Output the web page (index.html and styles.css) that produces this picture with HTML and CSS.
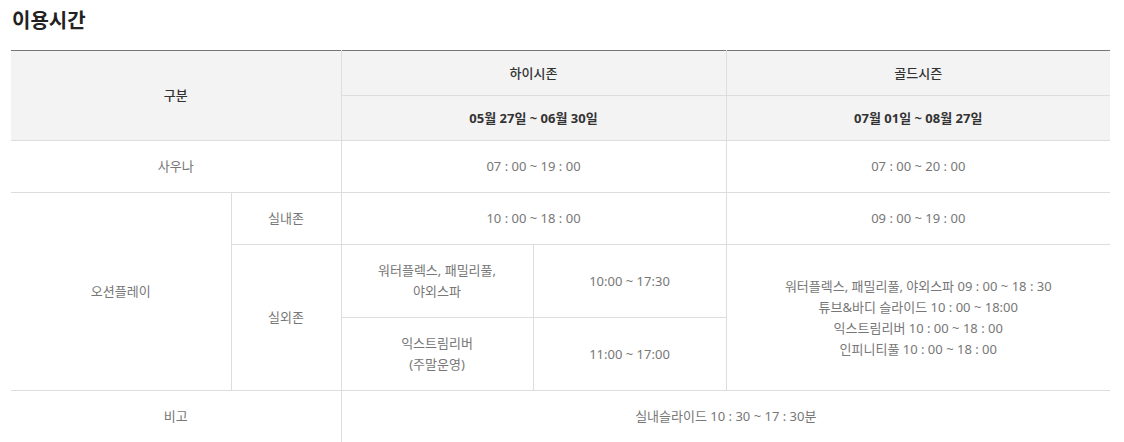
FILE: index.html
```html
<!DOCTYPE html>
<html lang="ko">
<head>
<meta charset="utf-8">
<link rel="stylesheet" href="styles.css">
</head>
<body>
<div class="page">
  <h2 class="title">이용시간</h2>
  <table class="hours">
    <colgroup>
      <col class="c1"><col class="c2"><col class="c3"><col class="c4"><col class="c5">
    </colgroup>
    <thead>
      <tr class="hr1">
        <th rowspan="2" colspan="2" class="top">구분</th>
        <th colspan="2" class="top season">하이시존</th>
        <th class="top season">골드시즌</th>
      </tr>
      <tr class="hr2">
        <th colspan="2" class="date">05월 27일 ~ 06월 30일</th>
        <th class="date">07월 01일 ~ 08월 27일</th>
      </tr>
    </thead>
    <tbody>
      <tr class="r52">
        <td colspan="2">사우나</td>
        <td colspan="2">07 : 00 ~ 19 : 00</td>
        <td>07 : 00 ~ 20 : 00</td>
      </tr>
      <tr class="r52">
        <td rowspan="3">오션플레이</td>
        <td>실내존</td>
        <td colspan="2">10 : 00 ~ 18 : 00</td>
        <td>09 : 00 ~ 19 : 00</td>
      </tr>
      <tr class="r73">
        <td rowspan="2">실외존</td>
        <td>워터플렉스, 패밀리풀,<br>야외스파</td>
        <td>10:00 ~ 17:30</td>
        <td rowspan="2" class="multi">워터플렉스, 패밀리풀, 야외스파 09 : 00 ~ 18 : 30<br>튜브&amp;바디 슬라이드 10 : 00 ~ 18:00<br>익스트림리버 10 : 00 ~ 18 : 00<br>인피니티풀 10 : 00 ~ 18 : 00</td>
      </tr>
      <tr class="r73">
        <td>익스트림리버<br>(주말운영)</td>
        <td>11:00 ~ 17:00</td>
      </tr>
      <tr class="r52">
        <td colspan="2">비고</td>
        <td colspan="3">실내슬라이드 10 : 30 ~ 17 : 30분</td>
      </tr>
    </tbody>
  </table>
</div>
</body>
</html>
```

FILE: styles.css
```css
html, body {
  margin: 0;
  padding: 0;
  background: #fff;
}
body {
  font-family: "Noto Sans", "Noto Sans CJK KR", sans-serif;
  color: #777;
}
.page {
  padding: 0 14px 0 11px;
}
.title {
  margin: 0;
  padding: 6px 0 0 1px;
  height: 50px;
  box-sizing: border-box;
  font-family: "Noto Sans CJK KR", sans-serif;
  font-size: 20px;
  line-height: 28px;
  font-weight: 700;
  color: #222;
}
.hours {
  width: 1099px;
  border-collapse: collapse;
  border-left: hidden;
  border-right: hidden;
  table-layout: fixed;
}
.c1 { width: 220px; }
.c2 { width: 110px; }
.c3 { width: 192px; }
.c4 { width: 193px; }
.c5 { width: 384px; }
.hours th,
.hours td {
  border: 1px solid #ddd;
  text-align: center;
  vertical-align: middle;
  font-size: 13px;
  line-height: 21px;
  padding: 0 10px;
}
.hours th {
  background: #f3f3f3;
  color: #333;
  font-weight: 500;
}
.hours th.top {
  border-top: 1px solid #777;
}
.hours th.date {
  font-weight: 700;
}
.hr1 th.season,
.hr2 th {
  height: 44px;
}
.r52 td {
  height: 51px;
}
.r73 td {
  height: 72px;
}
.hours td {
  color: #777;
}
.multi {
  padding-top: 2px;
}
```
